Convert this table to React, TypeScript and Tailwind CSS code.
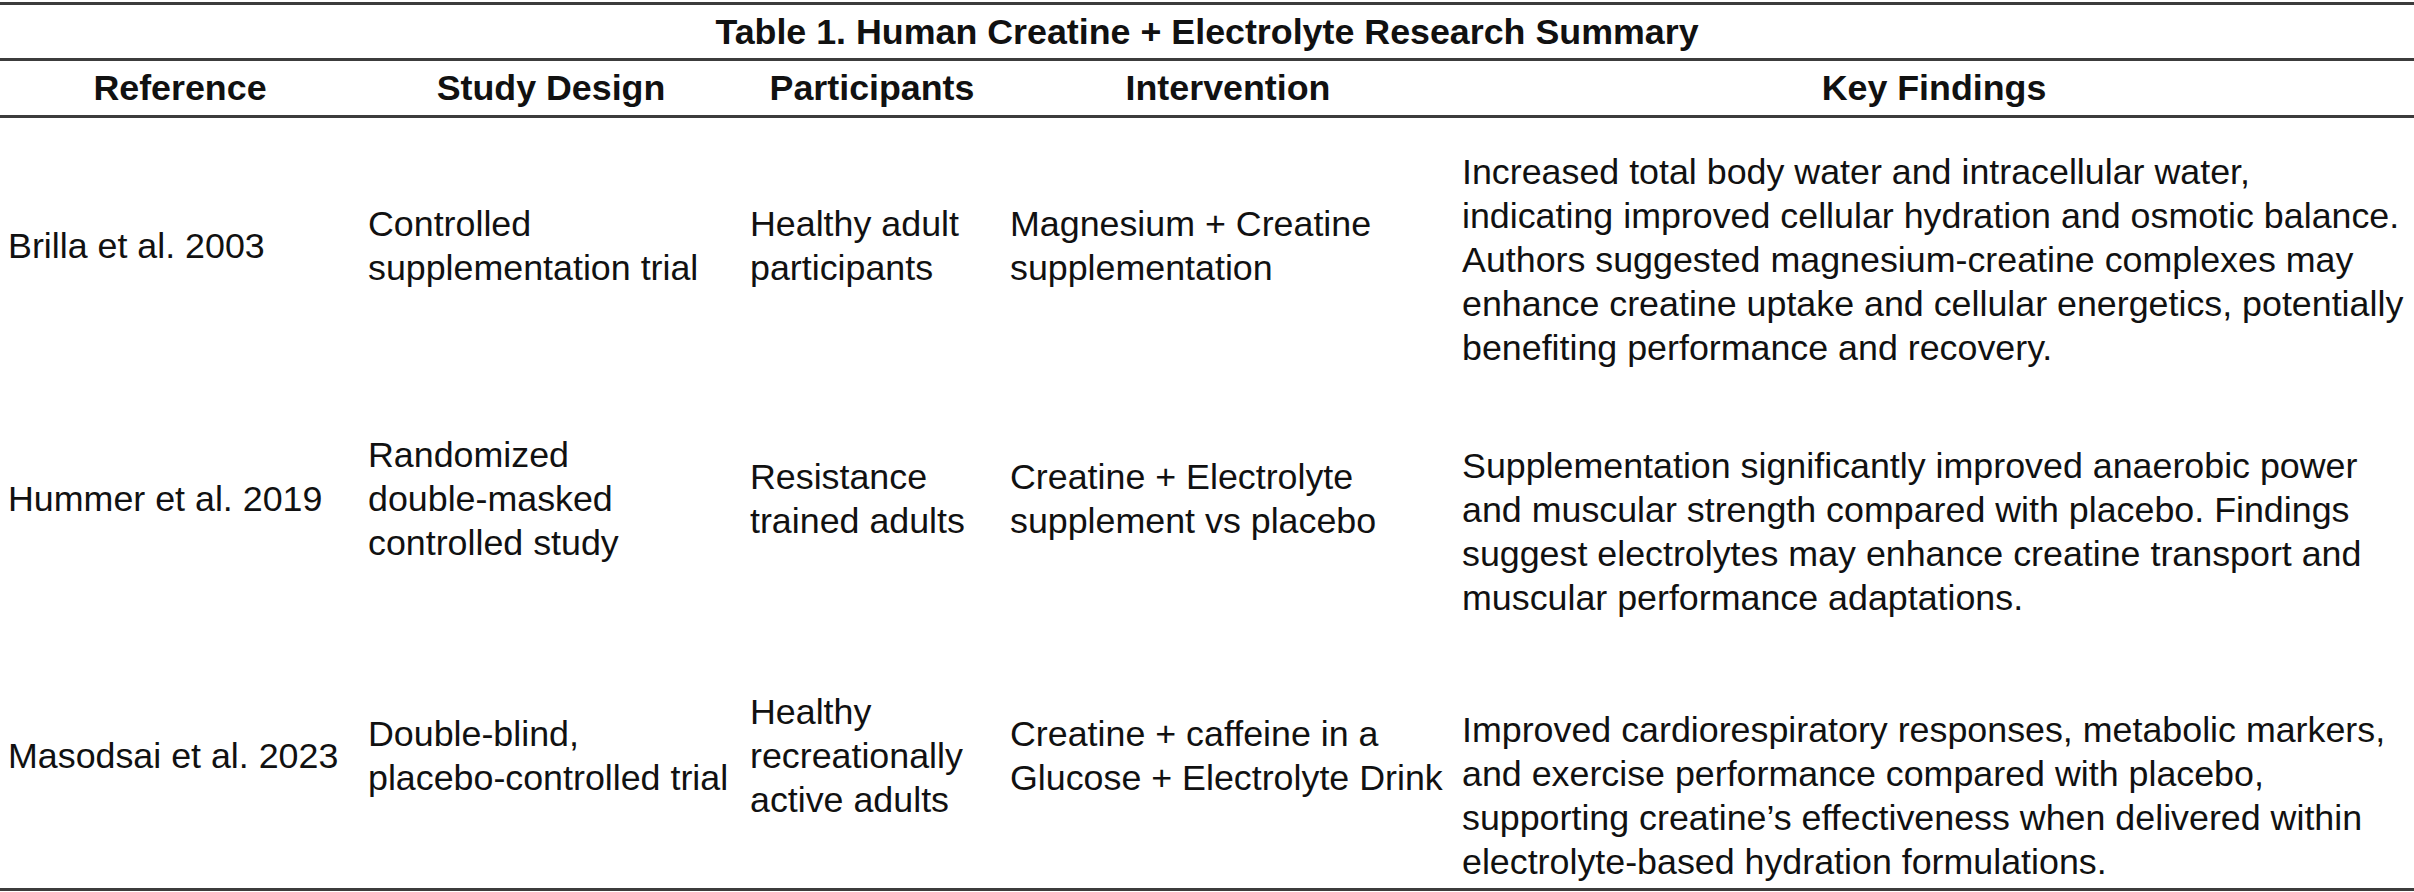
import React from 'react';

type Row = {
  reference: string;
  design: string[];
  participants: string[];
  intervention: string[];
  findings: string[];
  height: string;
};

const rows: Row[] = [
  {
    reference: 'Brilla et al. 2003',
    design: ['Controlled', 'supplementation trial'],
    participants: ['Healthy adult', 'participants'],
    intervention: ['Magnesium + Creatine', 'supplementation'],
    findings: [
      'Increased total body water and intracellular water,',
      'indicating improved cellular hydration and osmotic balance.',
      'Authors suggested magnesium-creatine complexes may',
      'enhance creatine uptake and cellular energetics, potentially',
      'benefiting performance and recovery.',
    ],
    height: 'h-[256px]',
  },
  {
    reference: 'Hummer et al. 2019',
    design: ['Randomized', 'double-masked', 'controlled study'],
    participants: ['Resistance', 'trained adults'],
    intervention: ['Creatine + Electrolyte', 'supplement vs placebo'],
    findings: [
      'Supplementation significantly improved anaerobic power',
      'and muscular strength compared with placebo. Findings',
      'suggest electrolytes may enhance creatine transport and',
      'muscular performance adaptations.',
    ],
    height: 'h-[250px]',
  },
  {
    reference: 'Masodsai et al. 2023',
    design: ['Double-blind,', 'placebo-controlled trial'],
    participants: ['Healthy', 'recreationally', 'active adults'],
    intervention: ['Creatine + caffeine in a', 'Glucose + Electrolyte Drink'],
    findings: [
      'Improved cardiorespiratory responses, metabolic markers,',
      'and exercise performance compared with placebo,',
      'supporting creatine\u2019s effectiveness when delivered within',
      'electrolyte-based hydration formulations.',
    ],
    height: 'h-[264px]',
  },
];

const headers = ['Reference', 'Study Design', 'Participants', 'Intervention', 'Key Findings'];

const cols = 'grid grid-cols-[360px_382px_260px_452px_960px]';

const Lines: React.FC<{ lines: string[] }> = ({ lines }) => (
  <div className="whitespace-nowrap">
    {lines.map((l) => (
      <div key={l}>{l}</div>
    ))}
  </div>
);

export default function App() {
  return (
    <div className="w-[2414px] h-[892px] bg-white pt-[2px] font-['Liberation_Sans',Arial,sans-serif] text-[35.8px] leading-[44px] text-[#111]">
      {/* Title */}
      <div className="h-[59px] border-y-[3px] border-[#3c3c3c] flex items-center justify-center font-bold">
        Table 1. Human Creatine + Electrolyte Research Summary
      </div>

      {/* Header row */}
      <div className={`${cols} h-[57px] border-b-[3px] border-[#3c3c3c] font-bold`}>
        {headers.map((h) => (
          <div key={h} className="flex items-center justify-center whitespace-nowrap">
            {h}
          </div>
        ))}
      </div>

      {/* Body */}
      <div className="h-[773px] border-b-[3px] border-[#3c3c3c]">
        {rows.map((r) => (
          <div key={r.reference} className={`${cols} ${r.height}`}>
            <div className="flex items-center pl-[8px] whitespace-nowrap">{r.reference}</div>
            <div className="flex items-center pl-[8px]">
              <Lines lines={r.design} />
            </div>
            <div className="flex items-center pl-[8px]">
              <Lines lines={r.participants} />
            </div>
            <div className="flex items-center pl-[8px]">
              <Lines lines={r.intervention} />
            </div>
            <div className="flex items-end pl-[8px] pb-[4px]">
              <Lines lines={r.findings} />
            </div>
          </div>
        ))}
      </div>
    </div>
  );
}
